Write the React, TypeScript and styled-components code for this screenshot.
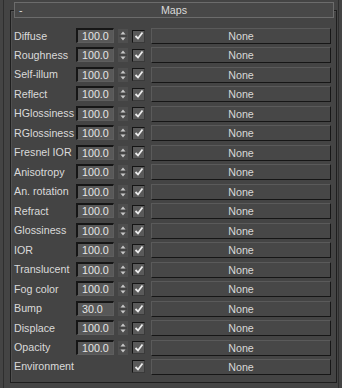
import React, { FC } from "react";
import styled, { createGlobalStyle } from "styled-components";

type MapRow = {
  label: string;
  amount?: string;
};

const rows: MapRow[] = [
  { label: "Diffuse", amount: "100.0" },
  { label: "Roughness", amount: "100.0" },
  { label: "Self-illum", amount: "100.0" },
  { label: "Reflect", amount: "100.0" },
  { label: "HGlossiness", amount: "100.0" },
  { label: "RGlossiness", amount: "100.0" },
  { label: "Fresnel IOR", amount: "100.0" },
  { label: "Anisotropy", amount: "100.0" },
  { label: "An. rotation", amount: "100.0" },
  { label: "Refract", amount: "100.0" },
  { label: "Glossiness", amount: "100.0" },
  { label: "IOR", amount: "100.0" },
  { label: "Translucent", amount: "100.0" },
  { label: "Fog color", amount: "100.0" },
  { label: "Bump", amount: "30.0" },
  { label: "Displace", amount: "100.0" },
  { label: "Opacity", amount: "100.0" },
  { label: "Environment" },
];

const GlobalStyle = createGlobalStyle`
  html, body {
    margin: 0;
    padding: 0;
    background: #444444;
  }

  body {
    font-family: "Liberation Sans", Arial, sans-serif;
    font-size: 10.7px;
    color: #dadada;
  }
`;

const Spinner: FC = () => (
  <SpinBox>
    <svg width="10" height="14" viewBox="0 0 10 14">
      <path d="M2.5 5.5 L5 2.5 L7.5 5.5 Z" fill="#c8c8c8" />
      <line x1="1" y1="7" x2="9" y2="7" stroke="#3a3a3a" />
      <path d="M2.5 8.5 L5 11.5 L7.5 8.5 Z" fill="#c8c8c8" />
    </svg>
  </SpinBox>
);

const Check: FC = () => (
  <CheckBox>
    <svg width="10" height="10" viewBox="0 0 10 10">
      <path
        d="M1.5 5 L4 7.5 L8.5 1.5"
        fill="none"
        stroke="#ececec"
        strokeWidth="1.8"
      />
    </svg>
  </CheckBox>
);

export default function App() {
  return (
    <>
      <GlobalStyle />
      <Panel>
        <Header>
          <Collapse>-</Collapse>
          <Title>Maps</Title>
        </Header>
        <Group>
          <Rows>
            {rows.map((row) => (
              <Row key={row.label}>
                <Label>{row.label}</Label>
                {row.amount ? (
                  <>
                    <Amount>{row.amount}</Amount>
                    <Spinner />
                  </>
                ) : (
                  <Blank />
                )}
                <Check />
                <MapButton>None</MapButton>
              </Row>
            ))}
          </Rows>
        </Group>
      </Panel>
    </>
  );
}

const Panel = styled.div`
  box-sizing: border-box;
  width: 336px;
  height: 388px;
  margin-left: 3px;
  padding: 2px 0 0 6px;
  border-left: 1px solid #2e2e2e;
  border-right: 1px solid #2e2e2e;
`;

const Header = styled.div`
  position: relative;
  z-index: 1;
  box-sizing: border-box;
  display: flex;
  align-items: center;
  width: 320px;
  height: 16px;
  margin: 0 0 -8px 4px;
  padding: 0 4px;
  border: 1px solid #6c6c6c;
  background: #484848;
`;

const Collapse = styled.span`
  width: 8px;
  line-height: 14px;
`;

const Title = styled.span`
  flex: 1;
  text-align: center;
  line-height: 14px;
  margin-right: 8px;
`;

const Group = styled.div`
  box-sizing: border-box;
  width: 327px;
  height: 373px;
  padding: 17px 0 0 3px;
  border: 1px solid #1e1e1e;
  box-shadow: inset 1px 1px 0 #505050;
`;

const Rows = styled.div`
  display: grid;
  grid-auto-rows: 16px;
  row-gap: 3.47px;
`;

const Row = styled.div`
  display: flex;
  align-items: center;
`;

const Label = styled.span`
  width: 62px;
  white-space: nowrap;
  line-height: 16px;
  margin-top: -1px;
`;

const Amount = styled.span`
  box-sizing: border-box;
  width: 38px;
  height: 15px;
  margin-top: -1px;
  padding-left: 4px;
  line-height: 13px;
  background: #585858;
  color: #e4e4e4;
  border-top: 2px solid #161616;
  border-left: 2px solid #161616;
  border-right: 1px solid #5e5e5e;
  border-bottom: 1px solid #5e5e5e;
`;

const SpinBox = styled.span`
  display: flex;
  width: 10px;
  height: 14px;
  margin-left: 4px;
  background: #4e4e4e;
`;

const Blank = styled.span`
  width: 52px;
`;

const CheckBox = styled.span`
  box-sizing: border-box;
  display: flex;
  align-items: center;
  justify-content: center;
  width: 13px;
  height: 13px;
  margin-left: 4px;
  background: #5a5a5a;
  border-top: 1px solid #141414;
  border-left: 1px solid #141414;
  border-right: 1px solid #3a3a3a;
  border-bottom: 1px solid #3a3a3a;
`;

const MapButton = styled.span`
  box-sizing: border-box;
  width: 180px;
  height: 16px;
  margin-left: 6px;
  text-align: center;
  line-height: 14px;
  background: #474747;
  color: #d8d8d8;
  border-top: 1px solid #5a5a5a;
  border-left: 1px solid #5a5a5a;
  border-right: 1px solid #161616;
  border-bottom: 1px solid #161616;
`;
